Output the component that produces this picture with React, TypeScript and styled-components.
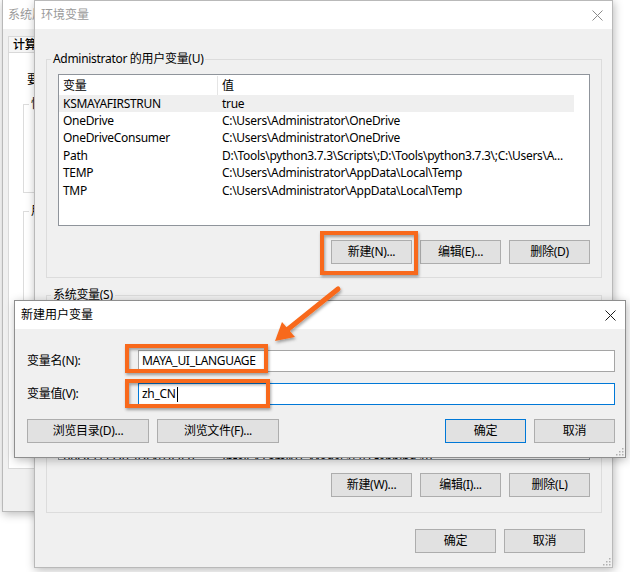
import React from "react";
import styled, { createGlobalStyle } from "styled-components";

const Global = createGlobalStyle`
  html, body { margin: 0; padding: 0; background: #fff; }
  body {
    width: 630px; height: 572px; overflow: hidden;
    font-family: "Noto Sans", "Noto Sans CJK SC", sans-serif;
    font-size: 12px; line-height: 16px; color: #000;
    letter-spacing: -0.3px;
  }
`;

const Desktop = styled.div`
  position: relative;
  width: 630px;
  height: 572px;
  overflow: hidden;
  background: #fff;
`;

const Window = styled.div<{ $x: number; $y: number; $w: number; $h: number; $active?: boolean }>`
  position: absolute;
  left: ${(p) => p.$x}px;
  top: ${(p) => p.$y}px;
  width: ${(p) => p.$w}px;
  height: ${(p) => p.$h}px;
  box-sizing: border-box;
  background: #f0f0f0;
  border: 1px solid ${(p) => (p.$active ? "#8e8e8e" : "#b9b9b9")};
  box-shadow: 1px 2px 9px rgba(0, 0, 0, 0.28);
  display: flex;
  flex-direction: column;
`;

const TitleBar = styled.div<{ $h: number; $pl: number }>`
  flex: none;
  height: ${(p) => p.$h}px;
  background: #fff;
  display: flex;
  align-items: center;
  padding-left: ${(p) => p.$pl}px;
`;

const Title = styled.span<{ $active?: boolean }>`
  flex: 1;
  white-space: nowrap;
  letter-spacing: 0;
  color: ${(p) => (p.$active ? "#000" : "#9a9a9a")};
`;

const CloseBox = styled.div`
  width: 30px;
  height: 100%;
  display: flex;
  align-items: center;
  justify-content: center;
`;

const CloseIcon = ({ color }: { color: string }) => (
  <svg width="11" height="11" viewBox="0 0 11 11">
    <path d="M0.5 0.5 L10.5 10.5 M10.5 0.5 L0.5 10.5" stroke={color} strokeWidth="1" fill="none" />
  </svg>
);

/* ---------- background window ---------- */
const BgBody = styled.div`
  flex: 1;
  padding: 7px 0 0 5px;
  display: flex;
  flex-direction: column;
`;

const TabStrip = styled.div`
  display: flex;
  height: 16px;
`;

const Tab = styled.div`
  box-sizing: border-box;
  padding: 0 6px 0 4px;
  border: 1px solid #d9d9d9;
  border-bottom: none;
  background: #f5f5f5;
  font-weight: 500;
  line-height: 15px;
  white-space: nowrap;
`;

const TabPanel = styled.div`
  height: 417px;
  box-sizing: border-box;
  border: 1px solid #d9d9d9;
  background: #fff;
  padding: 19px 0 0 14px;
  display: flex;
  flex-direction: column;
`;

const PanelNote = styled.div`
  padding-left: 4px;
  line-height: 16px;
  white-space: nowrap;
`;

const BgGroup = styled.div<{ $mt: number; $h: number }>`
  position: relative;
  margin-top: ${(p) => p.$mt}px;
  height: ${(p) => p.$h}px;
  box-sizing: border-box;
  border: 1px solid #dcdcdc;
`;

const BgGroupLabel = styled.span`
  position: absolute;
  top: -9px;
  left: 5px;
  padding: 0 2px;
  background: #fff;
  white-space: nowrap;
`;

/* ---------- env window ---------- */
const EnvBody = styled.div`
  flex: 1;
  display: flex;
  flex-direction: column;
  padding: 0 10px 0 11px;
`;

const Group = styled.div<{ $h: number; $mt: number }>`
  position: relative;
  flex: none;
  height: ${(p) => p.$h}px;
  margin-top: ${(p) => p.$mt}px;
  box-sizing: border-box;
  border: 1px solid #dcdcdc;
  padding: 14px 11px 0 11px;
  display: flex;
  flex-direction: column;
`;

const GroupLabel = styled.span`
  position: absolute;
  top: -9px;
  left: 4px;
  padding: 0 2px;
  background: #f0f0f0;
  white-space: nowrap;
`;

const List = styled.div<{ $h: number }>`
  flex: none;
  height: ${(p) => p.$h}px;
  box-sizing: border-box;
  border: 1px solid #8f949b;
  background: #fff;
  overflow: hidden;
`;

const HeaderRow = styled.div`
  display: flex;
  height: 20px;
  align-items: center;
  padding-top: 1px;
  box-sizing: border-box;
`;

const Row = styled.div<{ $selected?: boolean }>`
  display: flex;
  width: 515px;
  height: 17.4px;
  align-items: center;
  background: ${(p) => (p.$selected ? "#efefef" : "transparent")};
`;

const Cell = styled.div<{ $w: number; $divider?: boolean }>`
  flex: none;
  width: ${(p) => p.$w}px;
  box-sizing: border-box;
  padding: 0 4px;
  white-space: nowrap;
  overflow: hidden;
  text-overflow: ellipsis;
  border-right: ${(p) => (p.$divider ? "1px solid #e5e5e5" : "none")};
  height: 100%;
  display: flex;
  align-items: center;
`;

const ButtonRow = styled.div<{ $mt: number; $mr?: number; $between?: boolean }>`
  flex: none;
  display: flex;
  justify-content: ${(p) => (p.$between ? "space-between" : "flex-end")};
  gap: 8px;
  margin-top: ${(p) => p.$mt}px;
  margin-right: ${(p) => p.$mr ?? 0}px;
`;

const ButtonGroup = styled.div`
  display: flex;
  gap: 8px;
`;

const Button = styled.div<{ $w: number; $default?: boolean }>`
  width: ${(p) => p.$w}px;
  height: 24px;
  box-sizing: border-box;
  background: #e1e1e1;
  border: 1px solid ${(p) => (p.$default ? "#0078d7" : "#adadad")};
  display: flex;
  align-items: center;
  justify-content: center;
  white-space: nowrap;
`;

/* ---------- dialog ---------- */
const DlgBody = styled.div`
  position: relative;
  flex: 1;
  display: flex;
  flex-direction: column;
  gap: 11px;
  padding: 21px 10px 14px 12px;
`;

const Field = styled.div`
  display: flex;
  align-items: center;
  height: 22px;
`;

const FieldLabel = styled.span`
  width: 111px;
  flex: none;
  white-space: nowrap;
`;

const Input = styled.div<{ $focused?: boolean }>`
  flex: 1;
  height: 22px;
  box-sizing: border-box;
  background: #fff;
  border: 1px solid ${(p) => (p.$focused ? "#0078d7" : "#a5a5a5")};
  padding-left: 3px;
  display: flex;
  align-items: center;
  white-space: nowrap;
`;

const Caret = styled.span`
  display: inline-block;
  width: 1px;
  height: 15px;
  background: #000;
  margin-left: 1px;
`;

const Grip = styled.svg`
  position: absolute;
  right: 1px;
  bottom: 1px;
`;

const Overlay = styled.svg`
  position: absolute;
  left: 0;
  top: 0;
  pointer-events: none;
`;

const GripIcon = () => (
  <Grip width="10" height="10" viewBox="0 0 10 10">
    {[
      [8, 2],
      [8, 5],
      [5, 5],
      [8, 8],
      [5, 8],
      [2, 8],
    ].map(([x, y], i) => (
      <rect key={i} x={x} y={y} width="1.5" height="1.5" fill="#b0b0b0" />
    ))}
  </Grip>
);

const userVars: [string, string][] = [
  ["KSMAYAFIRSTRUN", "true"],
  ["OneDrive", "C:\\Users\\Administrator\\OneDrive"],
  ["OneDriveConsumer", "C:\\Users\\Administrator\\OneDrive"],
  ["Path", "D:\\Tools\\python3.7.3\\Scripts\\;D:\\Tools\\python3.7.3\\;C:\\Users\\A..."],
  ["TEMP", "C:\\Users\\Administrator\\AppData\\Local\\Temp"],
  ["TMP", "C:\\Users\\Administrator\\AppData\\Local\\Temp"],
];

const sysVars: [string, string][] = [
  ["ComSpec", "C:\\WINDOWS\\system32\\cmd.exe"],
  ["DriverData", "C:\\Windows\\System32\\Drivers\\DriverData"],
  ["NUMBER_OF_PROCESSORS", "8"],
  ["OS", "Windows_NT"],
  ["Path", "C:\\WINDOWS\\system32;C:\\WINDOWS;C:\\WINDOWS\\System32\\Wbem"],
  ["PATHEXT", ".COM;.EXE;.BAT;.CMD;.VBS;.VBE;.JS;.JSE;.WSF;.WSH;.MSC"],
  ["PROCESSOR_ARCHITECTURE", "AMD64"],
  ["PROCESSOR_IDENTIFIER", "Intel64 Family 6 Model 158 Stepping 10"],
];

const VarList = ({ rows, h, selected }: { rows: [string, string][]; h: number; selected?: number }) => (
  <List $h={h}>
    <HeaderRow>
      <Cell $w={159} $divider>
        变量
      </Cell>
      <Cell $w={356}>值</Cell>
    </HeaderRow>
    {rows.map(([k, v], i) => (
      <Row key={k + i} $selected={i === selected}>
        <Cell $w={159}>{k}</Cell>
        <Cell $w={356}>{v}</Cell>
      </Row>
    ))}
  </List>
);

const ORANGE = "#f8691a";

export default function App() {
  return (
    <Desktop>
      <Global />

      {/* 系统属性 background window */}
      <Window $x={2} $y={-1} $w={420} $h={513}>
        <TitleBar $h={29} $pl={5}>
          <Title>系统属性</Title>
        </TitleBar>
        <BgBody>
          <TabStrip>
            <Tab>计算机名</Tab>
          </TabStrip>
          <TabPanel>
            <PanelNote>要进行大多数更改，你必须作为管理员登录。</PanelNote>
            <BgGroup $mt={16} $h={89}>
              <BgGroupLabel>性能</BgGroupLabel>
            </BgGroup>
            <BgGroup $mt={18} $h={90}>
              <BgGroupLabel>用户配置文件</BgGroupLabel>
            </BgGroup>
            <BgGroup $mt={18} $h={120}>
              <BgGroupLabel>启动和故障恢复</BgGroupLabel>
            </BgGroup>
          </TabPanel>
        </BgBody>
      </Window>

      {/* 环境变量 window */}
      <Window $x={34} $y={0} $w={579} $h={568}>
        <TitleBar $h={28} $pl={6}>
          <Title>环境变量</Title>
          <CloseBox>
            <CloseIcon color="#8a8a8a" />
          </CloseBox>
        </TitleBar>
        <EnvBody>
          <Group $h={219} $mt={30}>
            <GroupLabel>Administrator 的用户变量(U)</GroupLabel>
            <VarList rows={userVars} h={152} selected={0} />
            <ButtonRow $mt={14}>
              <Button $w={81}>新建(N)...</Button>
              <Button $w={81}>编辑(E)...</Button>
              <Button $w={81}>删除(D)</Button>
            </ButtonRow>
          </Group>
          <Group $h={218} $mt={17}>
            <GroupLabel>系统变量(S)</GroupLabel>
            <VarList rows={sysVars} h={150} />
            <ButtonRow $mt={13}>
              <Button $w={81}>新建(W)...</Button>
              <Button $w={81}>编辑(I)...</Button>
              <Button $w={81}>删除(L)</Button>
            </ButtonRow>
          </Group>
          <ButtonRow $mt={16} $mr={17}>
            <Button $w={81}>确定</Button>
            <Button $w={81}>取消</Button>
          </ButtonRow>
        </EnvBody>
        <GripIcon />
      </Window>

      {/* 新建用户变量 dialog */}
      <Window $x={14} $y={300} $w={612} $h={158} $active>
        <TitleBar $h={28} $pl={6}>
          <Title $active>新建用户变量</Title>
          <CloseBox>
            <CloseIcon color="#1a1a1a" />
          </CloseBox>
        </TitleBar>
        <DlgBody>
          <Field>
            <FieldLabel>变量名(N):</FieldLabel>
            <Input>MAYA_UI_LANGUAGE</Input>
          </Field>
          <Field>
            <FieldLabel>变量值(V):</FieldLabel>
            <Input $focused>
              zh_CN
              <Caret />
            </Input>
          </Field>
          <ButtonRow $mt={3} $between>
            <ButtonGroup>
              <Button $w={122}>浏览目录(D)...</Button>
              <Button $w={122}>浏览文件(F)...</Button>
            </ButtonGroup>
            <ButtonGroup>
              <Button $w={81} $default>
                确定
              </Button>
              <Button $w={81}>取消</Button>
            </ButtonGroup>
          </ButtonRow>
          <GripIcon />
        </DlgBody>
      </Window>

      {/* orange annotations */}
      <Overlay width="630" height="572" viewBox="0 0 630 572">
        <defs>
          <filter id="sh" x="-20%" y="-20%" width="140%" height="140%">
            <feDropShadow dx="1" dy="2" stdDeviation="1.6" floodColor="#000" floodOpacity="0.35" />
          </filter>
        </defs>
        <g filter="url(#sh)" fill="none" stroke={ORANGE} strokeWidth="4">
          <rect x="322" y="233" width="94" height="40" />
          <rect x="127" y="346" width="139" height="25" />
          <rect x="127" y="381" width="141" height="25" />
        </g>
        <g filter="url(#sh)">
          <line x1="338" y1="289" x2="287" y2="330" stroke={ORANGE} strokeWidth="5" strokeLinecap="round" />
          <polygon points="275,341 282,322 295,337" fill={ORANGE} />
        </g>
      </Overlay>
    </Desktop>
  );
}
